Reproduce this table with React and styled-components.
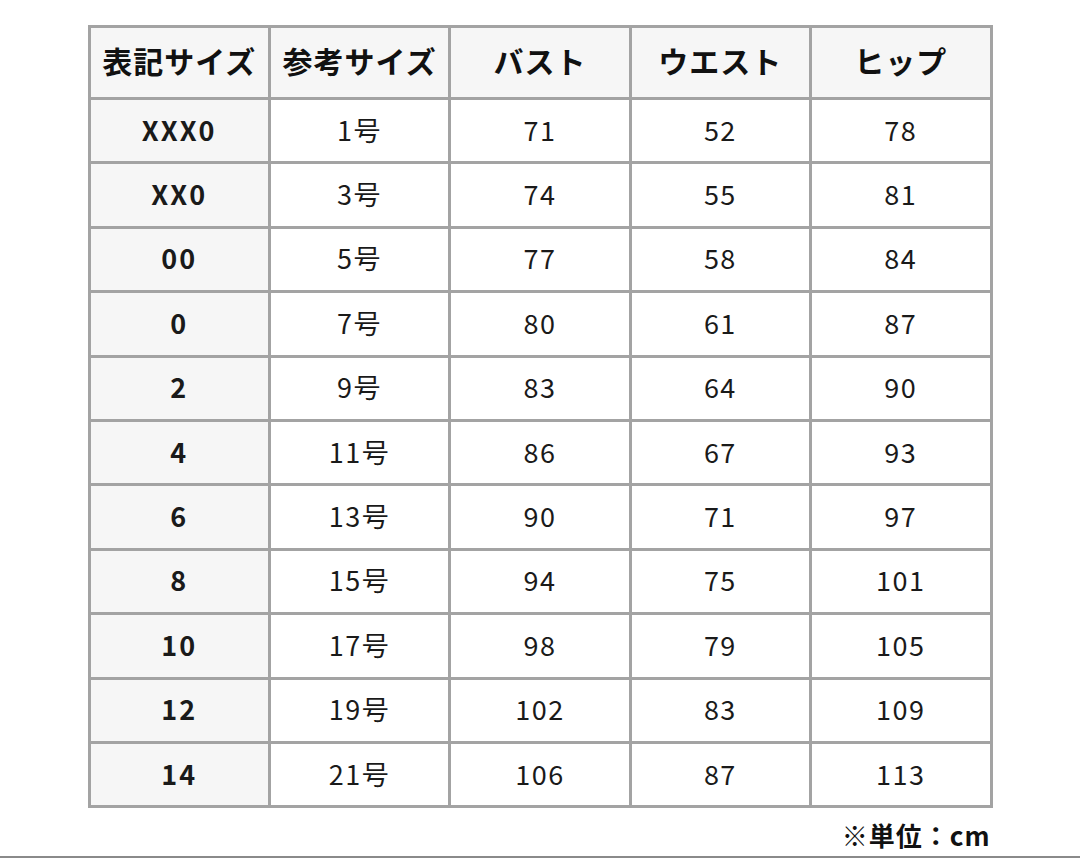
import React from "react";
import styled, { createGlobalStyle } from "styled-components";

const GlobalStyle = createGlobalStyle`
  html, body {
    margin: 0;
    padding: 0;
    background: #fff;
  }
  body {
    font-family: "Noto Sans CJK JP", "Noto Sans", sans-serif;
    color: #111;
  }
`;

const Page = styled.div`
  height: 858px;
  box-sizing: border-box;
  padding-top: 25px;
  border-bottom: 2px solid #8a8a8a;
  display: flex;
  flex-direction: column;
  align-items: center;
`;

const Wrap = styled.div`
  width: 905px;
  display: flex;
  flex-direction: column;
`;

const Table = styled.table`
  width: 905px;
  border-collapse: collapse;
  table-layout: fixed;
  border: 3px solid #a3a3a3;
`;

const HeadCell = styled.th`
  height: 64px;
  padding: 0 0 5px;
  border: 3px solid #a3a3a3;
  background: #f6f6f6;
  font-size: 30px;
  font-weight: 700;
  letter-spacing: 1px;
  text-align: center;
  vertical-align: middle;
`;

const Cell = styled.td`
  height: 58.4px;
  padding: 0 0 3px;
  border: 3px solid #a3a3a3;
  background: ${(p) => (p.$label ? "#f6f6f6" : "#fff")};
  font-size: 27px;
  font-weight: ${(p) => (p.$label ? 700 : 400)};
  letter-spacing: ${(p) => (p.$label ? "2px" : "1.5px")};
  text-align: center;
  vertical-align: middle;
  color: #1a1a1a;
`;

const Note = styled.div`
  align-self: flex-end;
  margin-top: 8px;
  margin-right: 2px;
  font-size: 26px;
  font-weight: 700;
  letter-spacing: 1px;
`;

const headers = ["表記サイズ", "参考サイズ", "バスト", "ウエスト", "ヒップ"];

const rows = [
  ["XXX0", "1号", 71, 52, 78],
  ["XX0", "3号", 74, 55, 81],
  ["00", "5号", 77, 58, 84],
  ["0", "7号", 80, 61, 87],
  ["2", "9号", 83, 64, 90],
  ["4", "11号", 86, 67, 93],
  ["6", "13号", 90, 71, 97],
  ["8", "15号", 94, 75, 101],
  ["10", "17号", 98, 79, 105],
  ["12", "19号", 102, 83, 109],
  ["14", "21号", 106, 87, 113],
];

export default function App() {
  return (
    <>
      <GlobalStyle />
      <Page>
        <Wrap>
          <Table>
            <thead>
              <tr>
                {headers.map((h) => (
                  <HeadCell key={h}>{h}</HeadCell>
                ))}
              </tr>
            </thead>
            <tbody>
              {rows.map((r) => (
                <tr key={r[0]}>
                  {r.map((v, i) => (
                    <Cell key={i} $label={i === 0}>
                      {v}
                    </Cell>
                  ))}
                </tr>
              ))}
            </tbody>
          </Table>
          <Note>※単位：cm</Note>
        </Wrap>
      </Page>
    </>
  );
}
